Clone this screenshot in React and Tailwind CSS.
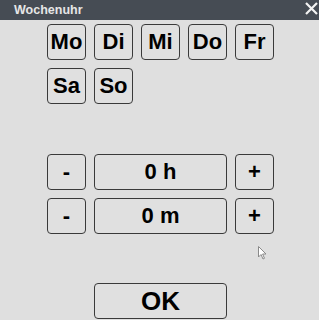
const days = ["Mo", "Di", "Mi", "Do", "Fr", "Sa", "So"];

const btn =
  "h-[36px] flex items-center justify-center rounded-[4px] border-[1.5px] border-[#3a3a3a] bg-[#e0e0e0] text-black font-bold leading-none";

export default function App() {
  return (
    <div className="relative w-[319px] h-[320px] overflow-hidden bg-[#dfdfdf] font-['Liberation_Sans',Arial,sans-serif]">
      {/* Title bar */}
      <div className="h-[20px] bg-[#464c54] flex items-center justify-between pl-[14px] pr-[1px]">
        <span className="text-[12.5px] font-bold text-[#e6e6e6] leading-none">Wochenuhr</span>
        <svg width="13" height="13" viewBox="0 0 13 13" className="mb-[3px]">
          <path d="M1 1 L12 12 M12 1 L1 12" stroke="#f2f2f2" strokeWidth="2.2" />
        </svg>
      </div>

      <div className="pl-[47px] pt-[4px]">
        {/* Weekdays */}
        <div className="grid grid-cols-[39px_39px_39px_39px_39px] gap-[8px]">
          {days.map((d) => (
            <div key={d} className={`${btn} text-[22px]`}>
              {d}
            </div>
          ))}
        </div>

        {/* Hours / minutes */}
        <div className="mt-[50px] grid grid-cols-[39px_133px_39px] gap-[8px]">
          <div className={`${btn} text-[22px]`}>-</div>
          <div className={`${btn} text-[22px]`}>0 h</div>
          <div className={`${btn} text-[22px]`}>+</div>
          <div className={`${btn} text-[22px]`}>-</div>
          <div className={`${btn} text-[22px]`}>0 m</div>
          <div className={`${btn} text-[22px]`}>+</div>
        </div>

        {/* OK */}
        <div className="mt-[49px] ml-[47px] w-[133px]">
          <div className={`${btn} text-[26px]`}>OK</div>
        </div>
      </div>

      {/* mouse pointer */}
      <svg width="10" height="14" viewBox="0 0 10 14" className="absolute left-[258px] top-[246px]">
        <path d="M0.5 0.5 L0.5 11 L3 8.5 L5 13 L6.5 12.3 L4.6 8 L8 8 Z" fill="#ffffff" stroke="#8a8a8a" strokeWidth="1" />
      </svg>
    </div>
  );
}
